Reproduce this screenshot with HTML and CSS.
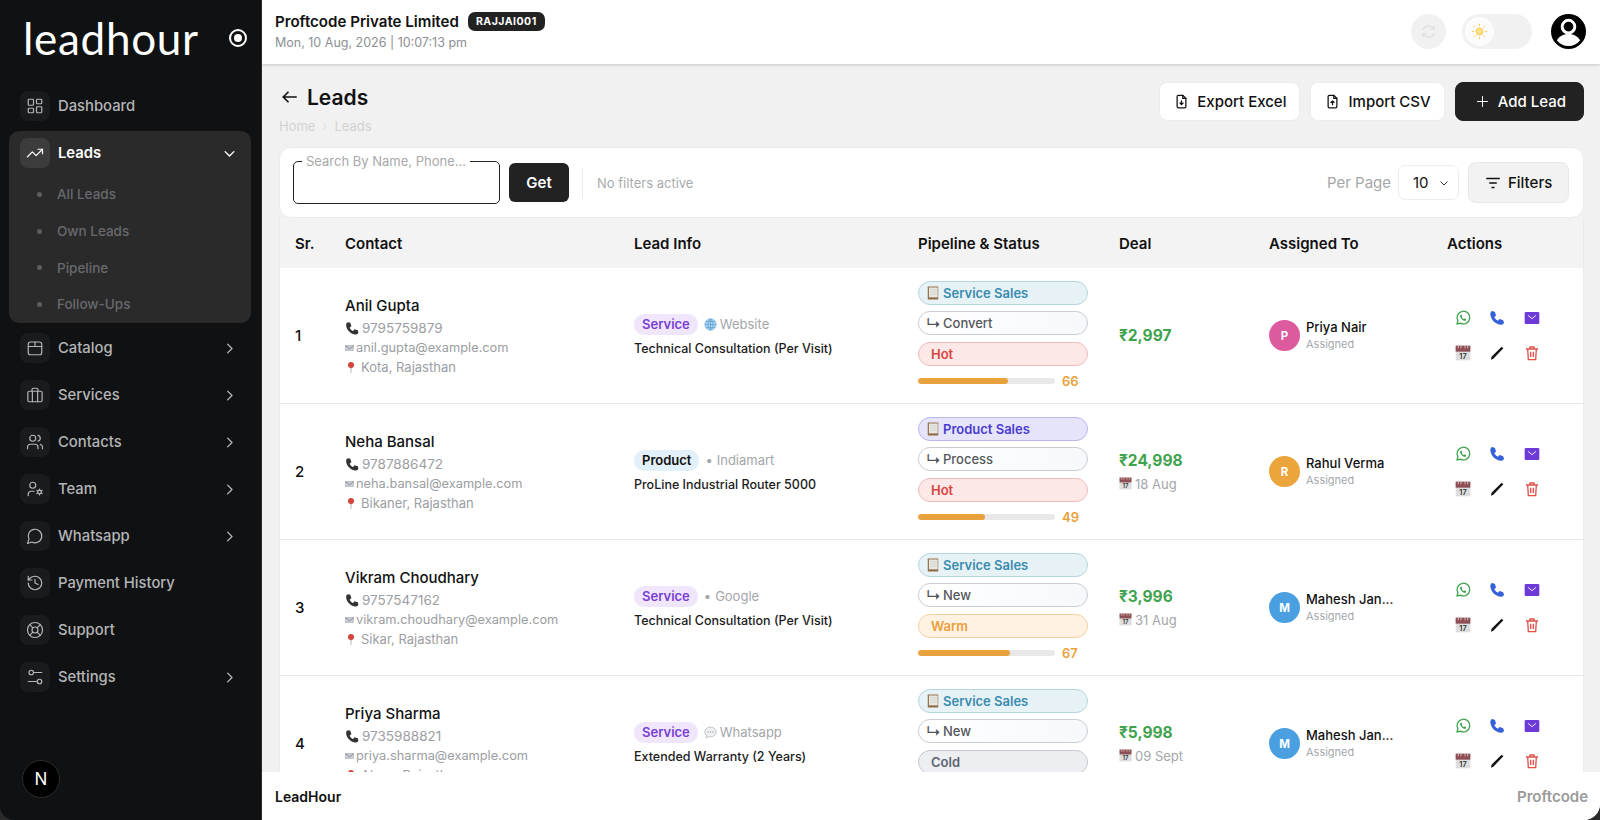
FILE: index.html
```html
<!DOCTYPE html>
<html lang="en">
<head>
<meta charset="UTF-8">
<title>Leads - LeadHour</title>
<link rel="stylesheet" href="styles.css">
</head>
<body>

<svg class="defs" aria-hidden="true">
    <symbol id="i-dash" viewBox="0 0 24 24"><rect x="3" y="3" width="7" height="8" rx="1"/><rect x="14" y="3" width="7" height="6" rx="1"/><rect x="3" y="15" width="7" height="6" rx="1"/><rect x="14" y="13" width="7" height="8" rx="1"/></symbol>
    <symbol id="i-trend" viewBox="0 0 24 24"><path d="M22 7l-8.5 8.5-5-5L2 17"/><path d="M16 7h6v6"/></symbol>
    <symbol id="i-box" viewBox="0 0 24 24"><rect x="3" y="4" width="18" height="17" rx="3"/><path d="M3 10h18M12 4v6"/></symbol>
    <symbol id="i-case" viewBox="0 0 24 24"><rect x="2.5" y="7" width="19" height="14" rx="2"/><path d="M8 7V5a2 2 0 0 1 2-2h4a2 2 0 0 1 2 2v2M8.5 7v14M15.5 7v14"/></symbol>
    <symbol id="i-users" viewBox="0 0 24 24"><path d="M16 21v-2a4 4 0 0 0-4-4H6a4 4 0 0 0-4 4v2"/><circle cx="9" cy="7" r="4"/><path d="M22 21v-2a4 4 0 0 0-3-3.87M16 3.13a4 4 0 0 1 0 7.75"/></symbol>
    <symbol id="i-team" viewBox="0 0 24 24"><circle cx="9" cy="7" r="4"/><path d="M3 21v-2a4 4 0 0 1 4-4h4"/><circle cx="18" cy="16" r="2.5"/><path d="M18 12v1.5M18 18.500v1.500M14.500 14l1.300.8M20.200 17.200l1.300.8M14.500 18l1.300-.8M20.200 14.800l1.300-.8"/></symbol>
    <symbol id="i-chat" viewBox="0 0 24 24"><path d="M7.900 20A9 9 0 1 0 4 16.100L2 22Z"/></symbol>
    <symbol id="i-history" viewBox="0 0 24 24"><path d="M3 12a9 9 0 1 0 9-9 9.750 9.750 0 0 0-6.740 2.740L3 8"/><path d="M3 3v5h5M12 7v5l4 2"/></symbol>
    <symbol id="i-buoy" viewBox="0 0 24 24"><circle cx="12" cy="12" r="10"/><circle cx="12" cy="12" r="4"/><path d="M4.930 4.930l4.240 4.240M14.830 9.170l4.240-4.240M14.830 14.830l4.240 4.240M9.170 14.830l-4.240 4.240"/></symbol>
    <symbol id="i-sliders" viewBox="0 0 24 24"><circle cx="7" cy="6" r="3"/><path d="M10 6h11M3 18h11"/><circle cx="18" cy="18" r="3"/></symbol>
    <symbol id="i-right" viewBox="0 0 24 24"><path d="M9 5l7 7-7 7"/></symbol>
    <symbol id="i-down" viewBox="0 0 24 24"><path d="M5 9l7 7 7-7"/></symbol>
    <symbol id="e-phone" viewBox="0 0 24 24"><path d="M5 2l4 1 2 6-3 2c1 3 3 5 6 6l2-3 6 2 1 4c-1 2-3 3-5 3C9 23 1 13 2 6c0-2 1-3 3-4z"/></symbol>
    <symbol id="e-mail" viewBox="0 0 24 18"><rect x="1" y="2" width="22" height="14" fill="#c9ccd2" stroke="#8f9399"/><path d="M1 3l11 8 11-8" fill="none" stroke="#777b81" stroke-width="2"/></symbol>
    <symbol id="e-pin" viewBox="0 0 24 24"><path d="M11 11h2l-.4 12h-1.200z" fill="#9aa0a6"/><circle cx="12" cy="7" r="6" fill="#d8423c"/></symbol>
    <symbol id="e-globe" viewBox="0 0 24 24"><circle cx="12" cy="12" r="10.500" fill="#a9d3f0" stroke="#5b9dd0"/><path d="M1.500 12h21M12 1.500v21M3.500 6.500h17M3.500 17.500h17M12 1.500c-6 6-6 15 0 21M12 1.500c6 6 6 15 0 21" fill="none" stroke="#5b9dd0" stroke-width="1.200"/></symbol>
    <symbol id="e-bubble" viewBox="0 0 24 24"><path d="M12 2c6 0 10.500 4 10.500 9S18 20 12 20c-1 0-2 0-3-.4L4 22l1-4.500C2.800 16 1.500 13.700 1.500 11 1.500 6 6 2 12 2z" fill="#eef0f2" stroke="#b5b9be" stroke-width="1.500"/><circle cx="7.500" cy="11" r="1.300" fill="#9aa0a6"/><circle cx="12" cy="11" r="1.300" fill="#9aa0a6"/><circle cx="16.500" cy="11" r="1.300" fill="#9aa0a6"/></symbol>
    <symbol id="e-cal" viewBox="0 0 24 24"><rect x="1" y="1" width="22" height="22" fill="#dedede"/><rect x="1" y="1" width="22" height="9" fill="#8d4f53"/><path d="M5 1v4M9 1v4M15 1v4M19 1v4" stroke="#e6d3d3" stroke-width="1.200"/><text x="12" y="21" font-size="11" font-weight="600" text-anchor="middle" fill="#333" font-family="Inter, sans-serif">17</text></symbol>
    <symbol id="e-ledger" viewBox="0 0 24 24"><rect x="3" y="1" width="18" height="22" rx="1" fill="#8f6b45"/><rect x="5" y="2.500" width="15" height="17" fill="#e8e8e4"/><path d="M7 6h11M7 10h11M7 14h11" stroke="#c2c2bc" stroke-width="1"/></symbol>
    <symbol id="a-wa" viewBox="0 0 24 24"><path d="M3 21l1.400-5A9.500 9.500 0 1 1 8 19.600z" fill="none" stroke="#3fa34d" stroke-width="2" stroke-linejoin="round"/><path d="M8.500 7.500c-1 1-1 2.500 0 4.300 1.200 2.200 3 3.700 5 4.300 1.500.4 2.700 0 3.300-1.200l-.2-1.300-2.200-1-1 1c-1.300-.5-2.600-1.800-3.200-3.100l.9-1-.9-2.200z" fill="#3fa34d"/></symbol>
    <symbol id="a-call" viewBox="0 0 24 24"><path d="M5 1.500l4 1.500 1.500 5.500-2.500 2c1 2.500 3 4.500 5.500 5.500l2-2.500 5.500 1.500 1.500 4c-.5 1.500-2 3-4 3C10 22 2 14 2 5.500c0-2 1.500-3.500 3-4z" fill="#3461d8"/></symbol>
    <symbol id="a-mail" viewBox="0 0 24 24"><rect x="1" y="3" width="22" height="18" rx="2" fill="#6d3bd9"/><path d="M6 8l6 5 6-5" fill="none" stroke="#e9e2fb" stroke-width="1.500"/></symbol>
    <symbol id="a-pen" viewBox="0 0 24 24"><path d="M3 22l.8-4.500L19 2.500l2.500 2.500L6.500 20.500z" fill="#111"/></symbol>
    <symbol id="a-trash" viewBox="0 0 24 24"><path d="M3 6h18M9 6V3h6v3M5.500 6l1 16h11l1-16M10 10v8M14 10v8" fill="none" stroke="#e2504a" stroke-width="2"/></symbol>
    <symbol id="b-down" viewBox="0 0 24 24"><path d="M14 2H7a2 2 0 0 0-2 2v16a2 2 0 0 0 2 2h10a2 2 0 0 0 2-2V7z"/><path d="M14 2v5h5M12 11v6M9.500 14.500l2.500 2.500 2.500-2.500"/></symbol>
    <symbol id="b-up" viewBox="0 0 24 24"><path d="M14 2H7a2 2 0 0 0-2 2v16a2 2 0 0 0 2 2h10a2 2 0 0 0 2-2V7z"/><path d="M14 2v5h5M12 17v-6M9.500 13.500l2.500-2.500 2.500 2.500"/></symbol>
</svg>

<div class="app">

    <aside class="sidebar">
        <div class="brand">
            <span class="logo">leadhour</span>
            <span class="pin-btn"></span>
        </div>
        <nav class="nav">
            <a class="nav-item"><span class="nav-ico"><svg><use href="#i-dash"/></svg></span>Dashboard</a>
            <div class="nav-group">
                <a class="nav-item open"><span class="nav-ico"><svg><use href="#i-trend"/></svg></span>Leads<svg class="chev"><use href="#i-down"/></svg></a>
                <a class="sub-item">All Leads</a>
                <a class="sub-item">Own Leads</a>
                <a class="sub-item">Pipeline</a>
                <a class="sub-item">Follow-Ups</a>
            </div>
            <a class="nav-item"><span class="nav-ico"><svg><use href="#i-box"/></svg></span>Catalog<svg class="chev"><use href="#i-right"/></svg></a>
            <a class="nav-item"><span class="nav-ico"><svg><use href="#i-case"/></svg></span>Services<svg class="chev"><use href="#i-right"/></svg></a>
            <a class="nav-item"><span class="nav-ico"><svg><use href="#i-users"/></svg></span>Contacts<svg class="chev"><use href="#i-right"/></svg></a>
            <a class="nav-item"><span class="nav-ico"><svg><use href="#i-team"/></svg></span>Team<svg class="chev"><use href="#i-right"/></svg></a>
            <a class="nav-item"><span class="nav-ico"><svg><use href="#i-chat"/></svg></span>Whatsapp<svg class="chev"><use href="#i-right"/></svg></a>
            <a class="nav-item"><span class="nav-ico"><svg><use href="#i-history"/></svg></span>Payment History</a>
            <a class="nav-item"><span class="nav-ico"><svg><use href="#i-buoy"/></svg></span>Support</a>
            <a class="nav-item"><span class="nav-ico"><svg><use href="#i-sliders"/></svg></span>Settings<svg class="chev"><use href="#i-right"/></svg></a>
        </nav>
        <div class="next-badge">N</div>
    </aside>

    <div class="main">
        <header class="topbar">
            <div class="company">
                <div class="company-line"><b>Proftcode Private Limited</b><span class="code">RAJJAI001</span></div>
                <div class="clock">Mon, 10 Aug, 2026 | 10:07:13 pm</div>
            </div>
            <div class="top-tools">
                <span class="round-btn">
                    <svg viewBox="0 0 24 24"><path d="M4 10a8 8 0 0 1 14-3l2 2M20 14a8 8 0 0 1-14 3l-2-2M20 4v5h-5M4 20v-5h5"/></svg>
                </span>
                <span class="theme-toggle">
                    <span class="thumb">
                        <svg viewBox="0 0 24 24"><circle cx="12" cy="12" r="5"/><path d="M12 1v3M12 20v3M1 12h3M20 12h3M4.200 4.200l2.100 2.100M17.700 17.700l2.100 2.100M4.200 19.800l2.100-2.100M17.700 6.300l2.100-2.100"/></svg>
                    </span>
                </span>
                <span class="profile">
                    <svg viewBox="0 0 36 36"><circle cx="18" cy="18" r="18" fill="#000"/><circle cx="18" cy="13" r="6.500" fill="none" stroke="#fff" stroke-width="3"/><path d="M6 27c3-5 8-6.500 12-6.500S27 22 30 27c-3 4-7 6-12 6s-9-2-12-6z" fill="#fff"/></svg>
                </span>
            </div>
        </header>

        <section class="content">
            <div class="page-head">
                <div>
                    <div class="title-line">
                        <svg class="back" viewBox="0 0 24 24"><path d="M21 12H3M10 5l-7 7 7 7"/></svg>
                        <h1>Leads</h1>
                    </div>
                    <div class="crumbs">Home<svg viewBox="0 0 24 24"><path d="M9 5l7 7-7 7"/></svg>Leads</div>
                </div>
                <div class="head-btns">
                    <button class="btn"><svg><use href="#b-down"/></svg>Export Excel</button>
                    <button class="btn"><svg><use href="#b-up"/></svg>Import CSV</button>
                    <button class="btn dark"><svg viewBox="0 0 24 24"><path d="M12 4v16M4 12h16"/></svg>Add Lead</button>
                </div>
            </div>

            <div class="toolbar">
                <div class="search"><label>Search By Name, Phone...</label></div>
                <button class="get-btn">Get</button>
                <span class="divider"></span>
                <span class="no-filters">No filters active</span>
                <span class="per-page">Per Page</span>
                <span class="select">10<svg viewBox="0 0 24 24"><path d="M5 9l7 7 7-7"/></svg></span>
                <button class="filter-btn"><svg viewBox="0 0 24 24"><path d="M3 6h18M7 12h10M10 18h4"/></svg>Filters</button>
            </div>

            <table class="leads">
                <colgroup>
                    <col class="c-sr"><col class="c-contact"><col class="c-info"><col class="c-pipe"><col class="c-deal"><col class="c-user"><col class="c-act">
                </colgroup>
                <thead>
                    <tr><th>Sr.</th><th>Contact</th><th>Lead Info</th><th>Pipeline &amp; Status</th><th>Deal</th><th>Assigned To</th><th>Actions</th></tr>
                </thead>
                <tbody>
                    <tr>
                        <td class="sr">1</td>
                        <td>
                            <div class="c-name">Anil Gupta</div>
                            <div class="c-phone"><svg><use href="#e-phone"/></svg>9795759879</div>
                            <div class="c-mail"><svg><use href="#e-mail"/></svg>anil.gupta@example.com</div>
                            <div class="c-loc"><svg><use href="#e-pin"/></svg>Kota, Rajasthan</div>
                        </td>
                        <td>
                            <div class="info-top"><span class="tag service">Service</span><span class="source"><svg><use href="#e-globe"/></svg>Website</span></div>
                            <div class="item-name">Technical Consultation (Per Visit)</div>
                        </td>
                        <td>
                            <div class="pill p-service"><svg><use href="#e-ledger"/></svg>Service Sales</div>
                            <div class="pill p-stage"><i>↳</i>Convert</div>
                            <div class="pill p-hot">Hot</div>
                            <div class="score"><span class="track"><span class="fill" style="width:66%"></span></span><b>66</b></div>
                        </td>
                        <td><div class="amount">₹2,997</div></td>
                        <td>
                            <div class="assignee"><span class="avatar pink">P</span><div><div class="a-name">Priya Nair</div><div class="a-sub">Assigned</div></div></div>
                        </td>
                        <td>
                            <div class="actions">
                                <svg><use href="#a-wa"/></svg><svg><use href="#a-call"/></svg><svg><use href="#a-mail"/></svg>
                                <svg><use href="#e-cal"/></svg><svg><use href="#a-pen"/></svg><svg><use href="#a-trash"/></svg>
                            </div>
                        </td>
                    </tr>
                    <tr>
                        <td class="sr">2</td>
                        <td>
                            <div class="c-name">Neha Bansal</div>
                            <div class="c-phone"><svg><use href="#e-phone"/></svg>9787886472</div>
                            <div class="c-mail"><svg><use href="#e-mail"/></svg>neha.bansal@example.com</div>
                            <div class="c-loc"><svg><use href="#e-pin"/></svg>Bikaner, Rajasthan</div>
                        </td>
                        <td>
                            <div class="info-top"><span class="tag product">Product</span><span class="source"><em>•</em>Indiamart</span></div>
                            <div class="item-name">ProLine Industrial Router 5000</div>
                        </td>
                        <td>
                            <div class="pill p-product"><svg><use href="#e-ledger"/></svg>Product Sales</div>
                            <div class="pill p-stage"><i>↳</i>Process</div>
                            <div class="pill p-hot">Hot</div>
                            <div class="score"><span class="track"><span class="fill" style="width:49%"></span></span><b>49</b></div>
                        </td>
                        <td><div class="amount">₹24,998</div><div class="due"><svg><use href="#e-cal"/></svg>18 Aug</div></td>
                        <td>
                            <div class="assignee"><span class="avatar amber">R</span><div><div class="a-name">Rahul Verma</div><div class="a-sub">Assigned</div></div></div>
                        </td>
                        <td>
                            <div class="actions">
                                <svg><use href="#a-wa"/></svg><svg><use href="#a-call"/></svg><svg><use href="#a-mail"/></svg>
                                <svg><use href="#e-cal"/></svg><svg><use href="#a-pen"/></svg><svg><use href="#a-trash"/></svg>
                            </div>
                        </td>
                    </tr>
                    <tr>
                        <td class="sr">3</td>
                        <td>
                            <div class="c-name">Vikram Choudhary</div>
                            <div class="c-phone"><svg><use href="#e-phone"/></svg>9757547162</div>
                            <div class="c-mail"><svg><use href="#e-mail"/></svg>vikram.choudhary@example.com</div>
                            <div class="c-loc"><svg><use href="#e-pin"/></svg>Sikar, Rajasthan</div>
                        </td>
                        <td>
                            <div class="info-top"><span class="tag service">Service</span><span class="source"><em>•</em>Google</span></div>
                            <div class="item-name">Technical Consultation (Per Visit)</div>
                        </td>
                        <td>
                            <div class="pill p-service"><svg><use href="#e-ledger"/></svg>Service Sales</div>
                            <div class="pill p-stage"><i>↳</i>New</div>
                            <div class="pill p-warm">Warm</div>
                            <div class="score"><span class="track"><span class="fill" style="width:67%"></span></span><b>67</b></div>
                        </td>
                        <td><div class="amount">₹3,996</div><div class="due"><svg><use href="#e-cal"/></svg>31 Aug</div></td>
                        <td>
                            <div class="assignee"><span class="avatar blue">M</span><div><div class="a-name">Mahesh Jan...</div><div class="a-sub">Assigned</div></div></div>
                        </td>
                        <td>
                            <div class="actions">
                                <svg><use href="#a-wa"/></svg><svg><use href="#a-call"/></svg><svg><use href="#a-mail"/></svg>
                                <svg><use href="#e-cal"/></svg><svg><use href="#a-pen"/></svg><svg><use href="#a-trash"/></svg>
                            </div>
                        </td>
                    </tr>
                    <tr>
                        <td class="sr">4</td>
                        <td>
                            <div class="c-name">Priya Sharma</div>
                            <div class="c-phone"><svg><use href="#e-phone"/></svg>9735988821</div>
                            <div class="c-mail"><svg><use href="#e-mail"/></svg>priya.sharma@example.com</div>
                            <div class="c-loc"><svg><use href="#e-pin"/></svg>Alwar, Rajasthan</div>
                        </td>
                        <td>
                            <div class="info-top"><span class="tag service">Service</span><span class="source"><svg><use href="#e-bubble"/></svg>Whatsapp</span></div>
                            <div class="item-name">Extended Warranty (2 Years)</div>
                        </td>
                        <td>
                            <div class="pill p-service"><svg><use href="#e-ledger"/></svg>Service Sales</div>
                            <div class="pill p-stage"><i>↳</i>New</div>
                            <div class="pill p-cold">Cold</div>
                            <div class="score"><span class="track"><span class="fill" style="width:40%"></span></span><b>40</b></div>
                        </td>
                        <td><div class="amount">₹5,998</div><div class="due"><svg><use href="#e-cal"/></svg>09 Sept</div></td>
                        <td>
                            <div class="assignee"><span class="avatar blue">M</span><div><div class="a-name">Mahesh Jan...</div><div class="a-sub">Assigned</div></div></div>
                        </td>
                        <td>
                            <div class="actions">
                                <svg><use href="#a-wa"/></svg><svg><use href="#a-call"/></svg><svg><use href="#a-mail"/></svg>
                                <svg><use href="#e-cal"/></svg><svg><use href="#a-pen"/></svg><svg><use href="#a-trash"/></svg>
                            </div>
                        </td>
                    </tr>
                </tbody>
            </table>
        </section>

        <footer class="footer">
            <b>LeadHour</b>
            <span>Proftcode</span>
        </footer>
    </div>

</div>

</body>
</html>
```

FILE: styles.css
```css
* {
    box-sizing: border-box;
}
html, body {
    height: 100%;
}
body {
    margin: 0;
    font-family: 'Inter', 'Liberation Sans', sans-serif;
    background: #2b2b2b;
    color: #111;
    overflow: hidden;
}
.defs {
    display: none;
}
.app {
    display: flex;
    height: 820px;
}

/* sidebar */
.sidebar {
    width: 261px;
    flex: none;
    display: flex;
    flex-direction: column;
    background: #101112;
    border-bottom-left-radius: 14px;
}
.brand {
    height: 84px;
    flex: none;
    display: flex;
    align-items: center;
    justify-content: space-between;
    padding: 0 14px 8px 23px;
}
.logo {
    font-family: 'Lato', sans-serif;
    font-weight: 400;
    font-size: 44px;
    letter-spacing: .7px;
    line-height: 1;
    color: #fff;
}
.pin-btn {
    width: 18px;
    height: 18px;
    border: 2px solid #fff;
    border-radius: 50%;
    position: relative;
}
.pin-btn::after {
    content: "";
    position: absolute;
    inset: 3px;
    border-radius: 50%;
    background: #fff;
}
.nav {
    display: flex;
    flex-direction: column;
    gap: 3px;
    padding: 0 10px 0 9px;
}
.nav-item {
    display: flex;
    align-items: center;
    gap: 8px;
    height: 44px;
    padding: 0 11px;
    font-size: 14.8px;
    font-weight: 500;
    color: #b4b5b7;
}
.nav-ico {
    width: 30px;
    height: 30px;
    flex: none;
    display: flex;
    align-items: center;
    justify-content: center;
    background: #1a1b1c;
    border-radius: 8px;
}
.nav-ico svg {
    width: 18px;
    height: 18px;
    fill: none;
    stroke: #b4b5b7;
    stroke-width: 1.6;
    stroke-linecap: round;
    stroke-linejoin: round;
}
.chev {
    width: 15px;
    height: 15px;
    margin-left: auto;
    margin-right: 3px;
    fill: none;
    stroke: #b4b5b7;
    stroke-width: 2.2;
    stroke-linecap: round;
    stroke-linejoin: round;
}
.nav-group {
    background: #2a2a2b;
    border-radius: 10px;
    height: 192px;
}
.nav-item.open {
    color: #fff;
    font-weight: 600;
}
.nav-item.open .nav-ico {
    background: #3c3c3d;
}
.nav-item.open svg {
    stroke: #fff;
}
.sub-item {
    display: flex;
    align-items: center;
    gap: 15px;
    height: 36.7px;
    padding-left: 28px;
    font-size: 13.5px;
    font-weight: 500;
    color: #68696b;
    position: relative;
    top: 1px;
}
.sub-item::before {
    content: "";
    width: 5px;
    height: 5px;
    border-radius: 50%;
    background: #5c5d60;
}
.next-badge {
    margin: auto 0 22px 22px;
    width: 38px;
    height: 38px;
    flex: none;
    display: flex;
    align-items: center;
    justify-content: center;
    background: #000;
    border: 1px solid #2c2c2c;
    border-radius: 50%;
    color: #fff;
    font-size: 17px;
    font-weight: 400;
}

/* main column */
.main {
    flex: 1;
    min-width: 0;
    display: flex;
    flex-direction: column;
    margin-left: 1px;
    background: #f1f1f1;
    border-bottom-right-radius: 16px;
    overflow: hidden;
}
.topbar {
    height: 64px;
    flex: none;
    display: flex;
    align-items: center;
    justify-content: space-between;
    padding: 0 14px 2px 13px;
    background: #fff;
    box-shadow: 0 1px 3px rgba(0,0,0,.18);
    position: relative;
}
.company-line {
    display: flex;
    align-items: center;
    gap: 9px;
    font-size: 15.1px;
}
.company-line b {
    font-weight: 600;
}
.code {
    background: #222;
    color: #fff;
    font-size: 10.5px;
    font-weight: 700;
    letter-spacing: .5px;
    padding: 3px 8px;
    border-radius: 7px;
}
.clock {
    margin-top: 4px;
    font-size: 12.5px;
    color: #8c8f93;
}
.top-tools {
    display: flex;
    align-items: center;
    gap: 18px;
}
.round-btn {
    width: 35px;
    height: 35px;
    display: flex;
    align-items: center;
    justify-content: center;
    background: #f1f1f1;
    border-radius: 50%;
}
.round-btn svg {
    width: 17px;
    height: 17px;
    fill: none;
    stroke: #e1e1e1;
    stroke-width: 2;
}
.theme-toggle {
    width: 70px;
    height: 35px;
    margin-left: -2px;
    display: flex;
    align-items: center;
    padding-left: 3px;
    background: #f1f1f1;
    border-radius: 18px;
}
.thumb {
    width: 29px;
    height: 29px;
    display: flex;
    align-items: center;
    justify-content: center;
    background: #fbfbfb;
    border-radius: 50%;
}
.thumb svg {
    width: 17px;
    height: 17px;
    fill: #fbe08a;
    stroke: #f6ca50;
    stroke-width: 1.4;
}
.profile {
    width: 35px;
    height: 35px;
    margin-left: 1px;
}
.profile svg {
    display: block;
    width: 35px;
    height: 35px;
}

.content {
    flex: 1;
    min-height: 0;
    overflow: hidden;
    padding: 19px 16px 0 17px;
}
.page-head {
    display: flex;
    justify-content: space-between;
    align-items: flex-start;
    margin-bottom: 12px;
}
.title-line {
    display: flex;
    align-items: center;
    gap: 8px;
    height: 28px;
    padding-left: 2px;
}
.title-line h1 {
    margin: 0;
    font-size: 21px;
    font-weight: 600;
}
.back {
    width: 18px;
    height: 18px;
    fill: none;
    stroke: #111;
    stroke-width: 2.2;
}
.crumbs {
    display: flex;
    align-items: center;
    gap: 4px;
    margin-top: 6px;
    height: 18px;
    font-size: 13px;
    color: #d2d2d2;
}
.crumbs svg {
    width: 11px;
    height: 11px;
    fill: none;
    stroke: #d2d2d2;
    stroke-width: 2;
}
.head-btns {
    display: flex;
    gap: 10px;
    margin-top: -1px;
}
.btn {
    display: flex;
    align-items: center;
    gap: 8px;
    height: 39px;
    padding: 0 13px 0 14px;
    font: inherit;
    font-size: 15px;
    font-weight: 500;
    color: #111;
    background: #fff;
    border: 1px solid #ececec;
    border-radius: 8px;
}
.btn svg {
    width: 15px;
    height: 15px;
    fill: none;
    stroke: #111;
    stroke-width: 2;
    stroke-linecap: round;
    stroke-linejoin: round;
}
.btn.dark {
    background: #222;
    border-color: #222;
    color: #fff;
    padding: 0 17px 0 19px;
}
.btn.dark svg {
    stroke: #fff;
    stroke-width: 1.6;
}

.toolbar {
    display: flex;
    align-items: center;
    height: 71px;
    padding: 0 14px 0 13px;
    background: #fff;
    border: 1px solid #ebebeb;
    border-radius: 12px;
}
.search {
    position: relative;
    width: 207px;
    height: 43px;
    margin-top: -1px;
    border: 1px solid #222;
    border-radius: 5px;
}
.search label {
    position: absolute;
    left: 8px;
    top: -8px;
    padding: 0 4px;
    background: #fff;
    font-size: 13px;
    line-height: 15px;
    color: #a7a9ac;
}
.get-btn {
    width: 60px;
    height: 39px;
    margin-left: 9px;
    font: inherit;
    font-size: 15px;
    font-weight: 600;
    color: #fff;
    background: #222;
    border: none;
    border-radius: 6px;
}
.divider {
    width: 1px;
    height: 30px;
    margin: 0 14px 0 13px;
    background: #ececec;
}
.no-filters {
    font-size: 13px;
    color: #a9abae;
}
.per-page {
    margin-left: auto;
    font-size: 15px;
    color: #a5a7aa;
}
.select {
    display: flex;
    align-items: center;
    justify-content: space-between;
    width: 61px;
    height: 35px;
    margin: 0 9px 0 7px;
    padding: 0 8px 0 14px;
    font-size: 15px;
    border: 1px solid #ececec;
    border-radius: 7px;
}
.select svg {
    width: 12px;
    height: 12px;
    fill: none;
    stroke: #333;
    stroke-width: 2;
}
.filter-btn {
    display: flex;
    align-items: center;
    gap: 6px;
    width: 101px;
    height: 41px;
    padding: 0 0 0 15px;
    font: inherit;
    font-size: 15px;
    font-weight: 500;
    color: #111;
    background: #f2f2f2;
    border: 1px solid #e8e8e8;
    border-radius: 8px;
}
.filter-btn svg {
    width: 18px;
    height: 18px;
    fill: none;
    stroke: #111;
    stroke-width: 2;
}

/* table */
.leads {
    width: 100%;
    table-layout: fixed;
    border-collapse: separate;
    border-spacing: 0;
    background: #fff;
    border-left: 1px solid #ebebeb;
    border-right: 1px solid #ebebeb;
}
.c-sr { width: 50px; }
.c-contact { width: 289px; }
.c-info { width: 284px; }
.c-pipe { width: 201px; }
.c-deal { width: 150px; }
.c-user { width: 178px; }
.leads th {
    height: 50px;
    padding: 0 15px;
    text-align: left;
    font-size: 15px;
    font-weight: 600;
    background: #f3f3f3;
}
.leads td {
    height: 136px;
    padding: 0 15px;
    vertical-align: middle;
    border-bottom: 1px solid #e9e9e9;
}
.leads td.sr {
    font-size: 15px;
    font-weight: 500;
}
.c-name {
    font-size: 15px;
    font-weight: 500;
    line-height: 22px;
    margin-bottom: 1px;
}
.c-phone, .c-mail, .c-loc {
    display: flex;
    align-items: center;
    color: #9b9ea3;
}
.c-phone {
    font-size: 13.5px;
    line-height: 20px;
}
.c-phone svg {
    width: 14px;
    height: 14px;
    margin-right: 3px;
    fill: #333;
}
.c-mail {
    font-size: 12.8px;
    line-height: 20px;
}
.c-mail svg {
    width: 9px;
    height: 8px;
    margin-right: 2px;
}
.c-loc {
    font-size: 13px;
    line-height: 19px;
}
.c-loc svg {
    width: 12px;
    height: 13px;
    margin-right: 4px;
}
.info-top {
    display: flex;
    align-items: center;
    gap: 6px;
}
.tag {
    height: 21px;
    padding: 0 8px;
    font-size: 13px;
    font-weight: 600;
    line-height: 21px;
    border-radius: 10px;
}
.tag.service {
    color: #7b3fd4;
    background: #efe6fb;
}
.tag.product {
    color: #111;
    background: #e2f0fa;
}
.source {
    display: flex;
    align-items: center;
    gap: 3px;
    font-size: 13px;
    color: #a3a6aa;
}
.source svg {
    width: 13px;
    height: 13px;
}
.source em {
    font-style: normal;
    margin-right: 1px;
}
.item-name {
    margin-top: 5px;
    font-size: 12.5px;
    font-weight: 500;
    line-height: 18px;
    color: #1c1c1c;
}
.pill {
    display: flex;
    align-items: center;
    width: 170px;
    height: 24px;
    margin-bottom: 6.5px;
    padding: 0 12px;
    font-size: 13px;
    font-weight: 600;
    border: 1px solid;
    border-radius: 12px;
}
.pill svg {
    width: 14px;
    height: 14px;
    margin: 0 3px 0 -5px;
}
.pill i {
    font-style: normal;
    font-size: 15px;
    width: 15px;
    margin-left: -5px;
    margin-right: 2px;
}
.p-service { color: #3a8bb0; background: #e6f2f6; border-color: #b7d5df; }
.p-product { color: #4a3ccf; background: #e5e4fb; border-color: #bab6ee; }
.p-stage { color: #55585d; font-weight: 500; background: linear-gradient(90deg, #fff, #f6f8fc); border-color: #c9ccd2; }
.p-hot { color: #d9453f; background: #fde8e8; border-color: #f3baba; }
.p-warm { color: #eca03b; background: #fff2e2; border-color: #f8d09e; }
.p-cold { color: #5c6470; background: #eceef1; border-color: #c5c9cf; }
.score {
    display: flex;
    align-items: center;
    gap: 7px;
    height: 18px;
}
.track {
    width: 137px;
    height: 6px;
    background: #e8e8e8;
    border-radius: 3px;
    overflow: hidden;
}
.fill {
    display: block;
    height: 100%;
    background: #e9a23b;
    border-radius: 3px;
}
.score b {
    font-size: 13px;
    font-weight: 600;
    color: #e9a23b;
}
.amount {
    font-size: 15.5px;
    font-weight: 700;
    line-height: 22px;
    color: #3fa34d;
}
.due {
    display: flex;
    align-items: center;
    gap: 3px;
    margin-top: 2px;
    font-size: 13px;
    line-height: 20px;
    color: #a3a6aa;
}
.due svg {
    width: 13px;
    height: 13px;
}
.assignee {
    display: flex;
    align-items: center;
    gap: 6px;
}
.avatar {
    width: 31px;
    height: 31px;
    flex: none;
    display: flex;
    align-items: center;
    justify-content: center;
    border-radius: 50%;
    font-size: 11.5px;
    font-weight: 700;
    color: #fff;
}
.avatar.pink { background: #dc5a9e; }
.avatar.amber { background: #eba53c; }
.avatar.blue { background: #4a9fe0; }
.a-name {
    font-size: 13px;
    font-weight: 500;
    line-height: 17px;
}
.a-sub {
    margin-top: 1px;
    font-size: 11px;
    line-height: 15px;
    color: #a6a8ab;
}
.actions {
    display: grid;
    grid-template-columns: repeat(3, 16px);
    column-gap: 18.5px;
    row-gap: 19px;
    padding-left: 7.5px;
}
.actions svg {
    width: 16px;
    height: 16px;
}

.footer {
    height: 48px;
    flex: none;
    display: flex;
    align-items: center;
    justify-content: space-between;
    padding: 0 12px 0 13px;
    background: #fff;
    font-size: 14px;
    position: relative;
}
.footer b {
    font-weight: 600;
}
.footer span {
    font-size: 15px;
    font-weight: 600;
    color: #9a9a9a;
}
```
